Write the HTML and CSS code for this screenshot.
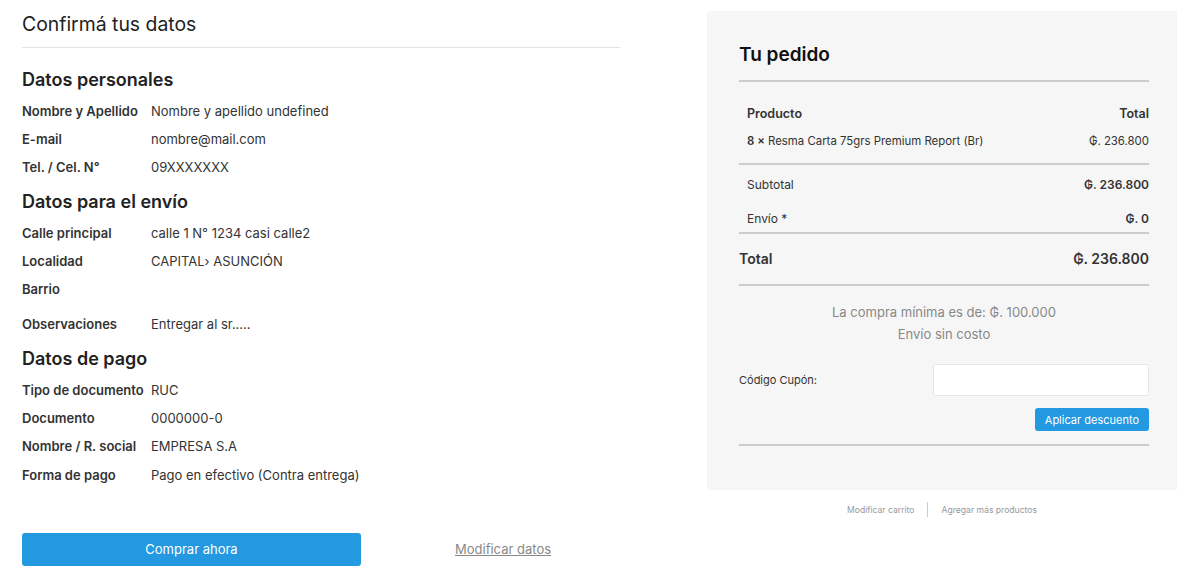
FILE: index.html
```html
<!DOCTYPE html>
<html lang="es">

<head>
    <meta charset="UTF-8">
    <meta name="viewport" content="width=device-width, initial-scale=1.0">
    <title>Confirmá tus datos</title>
    <link rel="stylesheet" href="styles.css">
</head>

<body>
    <div class="checkout">
        <div class="datos">
            <h1 class="titulo">Confirmá tus datos</h1>

            <h2 class="seccion">Datos personales</h2>
            <div class="fila"><span class="label">Nombre y Apellido</span><span>Nombre y apellido undefined</span></div>
            <div class="fila"><span class="label">E-mail</span><span>nombre@mail.com</span></div>
            <div class="fila"><span class="label">Tel. / Cel. N°</span><span>09XXXXXXX</span></div>

            <h2 class="seccion">Datos para el envío</h2>
            <div class="fila"><span class="label">Calle principal</span><span>calle 1 N° 1234 casi calle2</span></div>
            <div class="fila"><span class="label">Localidad</span><span>CAPITAL› ASUNCIÓN</span></div>
            <div class="fila"><span class="label">Barrio</span><span></span></div>
            <div class="fila obs"><span class="label">Observaciones</span><span>Entregar al sr.....</span></div>

            <h2 class="seccion">Datos de pago</h2>
            <div class="fila"><span class="label">Tipo de documento</span><span>RUC</span></div>
            <div class="fila"><span class="label">Documento</span><span>0000000-0</span></div>
            <div class="fila"><span class="label">Nombre / R. social</span><span>EMPRESA S.A</span></div>
            <div class="fila"><span class="label">Forma de pago</span><span>Pago en efectivo (Contra entrega)</span></div>

            <div class="acciones">
                <button class="btn-comprar">Comprar ahora</button>
                <a href="#" class="link-modificar">Modificar datos</a>
            </div>
        </div>

        <div class="lateral">
            <div class="pedido">
                <h2 class="pedido-titulo">Tu pedido</h2>

                <div class="items">
                    <div class="linea cabecera"><span>Producto</span><span>Total</span></div>
                    <div class="linea producto"><span><b>8 ×</b> Resma Carta 75grs Premium Report (Br)</span><span>₲. 236.800</span></div>
                </div>

                <div class="totales">
                    <div class="linea"><span>Subtotal</span><b>₲. 236.800</b></div>
                    <div class="linea"><span>Envío *</span><b>₲. 0</b></div>
                </div>

                <div class="linea total"><span>Total</span><span>₲. 236.800</span></div>

                <div class="aviso">
                    <p>La compra mínima es de: ₲. 100.000</p>
                    <p>Envío sin costo</p>
                </div>

                <div class="cupon">
                    <label for="cupon">Código Cupón:</label>
                    <input type="text" id="cupon">
                </div>
                <div class="cupon-accion">
                    <button class="btn-cupon">Aplicar descuento</button>
                </div>
            </div>

            <div class="links">
                <a href="#">Modificar carrito</a>
                <span class="sep"></span>
                <a href="#">Agregar más productos</a>
            </div>
        </div>
    </div>
</body>

</html>
```

FILE: styles.css
```css
* {
    box-sizing: border-box;
    margin: 0;
    padding: 0;
}

body {
    font-family: Inter, "Noto Sans", sans-serif;
    background: #fff;
    color: #333;
}

.checkout {
    display: flex;
    padding: 11px 0 0 22px;
}

/* columna izquierda */
.datos {
    width: 598px;
}

.titulo {
    font-size: 19.4px;
    font-weight: 400;
    color: #222;
    line-height: 26px;
    padding-bottom: 10px;
    border-bottom: 1px solid #e2e2e2;
}

.seccion {
    font-size: 18px;
    font-weight: 600;
    color: #222;
    line-height: 24px;
    margin-top: 14px;
    margin-bottom: 9.5px;
}

.datos .titulo + .seccion {
    margin-top: 20px;
}

.fila {
    display: grid;
    grid-template-columns: 129px 1fr;
    font-size: 13px;
    line-height: 18px;
    min-height: 18px;
    margin-bottom: 10.3px;
}

.fila.obs {
    margin-top: 17px;
}

.label {
    font-weight: 600;
    color: #333;
}

.acciones {
    display: flex;
    align-items: center;
    margin-top: 49px;
}

.btn-comprar {
    width: 339px;
    height: 33px;
    background: #2299e0;
    color: #fff;
    border: none;
    border-radius: 3px;
    font-family: inherit;
    font-size: 13px;
}

.link-modificar {
    margin-left: 94px;
    font-size: 13px;
    color: #888;
}

/* columna derecha */
.lateral {
    margin-left: 87px;
    flex: 1;
}

.pedido {
    background: #f6f6f6;
    border-radius: 4px 0 0 4px;
    padding: 30px 28px 44px 32px;
}

.pedido-titulo {
    font-size: 19px;
    font-weight: 600;
    color: #111;
    line-height: 28px;
    padding-bottom: 11px;
    border-bottom: 2px solid #ccc;
}

.linea {
    display: flex;
    justify-content: space-between;
    align-items: center;
}

.items {
    padding: 17px 0 8px;
    border-bottom: 2px solid #ccc;
}

.items .linea {
    padding: 0 0 0 8px;
    height: 28px;
}

.cabecera {
    font-size: 12.5px;
    font-weight: 600;
}

.producto {
    font-size: 11.4px;
}

.producto b {
    font-weight: 600;
}

.totales {
    padding: 2px 0 0;
    border-bottom: 2px solid #ccc;
}

.totales .linea {
    padding-left: 8px;
    font-size: 12px;
    height: 34px;
}

.totales .linea + .linea {
    height: 31px;
    padding-top: 3px;
}

.totales b {
    font-weight: 600;
}

.total {
    font-size: 14px;
    font-weight: 600;
    height: 52px;
    padding-bottom: 2px;
    border-bottom: 2px solid #ccc;
}

.aviso {
    text-align: center;
    font-size: 13px;
    color: #888;
    line-height: 22px;
    padding-top: 15px;
}

.cupon {
    display: flex;
    justify-content: space-between;
    align-items: center;
    margin-top: 19px;
    font-size: 11px;
    color: #333;
}

.cupon input {
    width: 216px;
    height: 32px;
    border: 1px solid #e6e6e6;
    border-radius: 3px;
    background: #fff;
}

.cupon-accion {
    display: flex;
    justify-content: flex-end;
    margin-top: 12px;
    padding-bottom: 13px;
    border-bottom: 2px solid #ccc;
}

.btn-cupon {
    background: #2299e0;
    color: #fff;
    border: none;
    border-radius: 3px;
    height: 23px;
    padding: 0 10px;
    font-family: inherit;
    font-size: 11px;
}

.links {
    display: flex;
    justify-content: center;
    align-items: center;
    margin-top: 12px;
    font-size: 8.6px;
}

.links a {
    color: #999;
    text-decoration: none;
}

.sep {
    width: 1px;
    height: 15px;
    background: #ccc;
    margin: 0 13px;
}
```
